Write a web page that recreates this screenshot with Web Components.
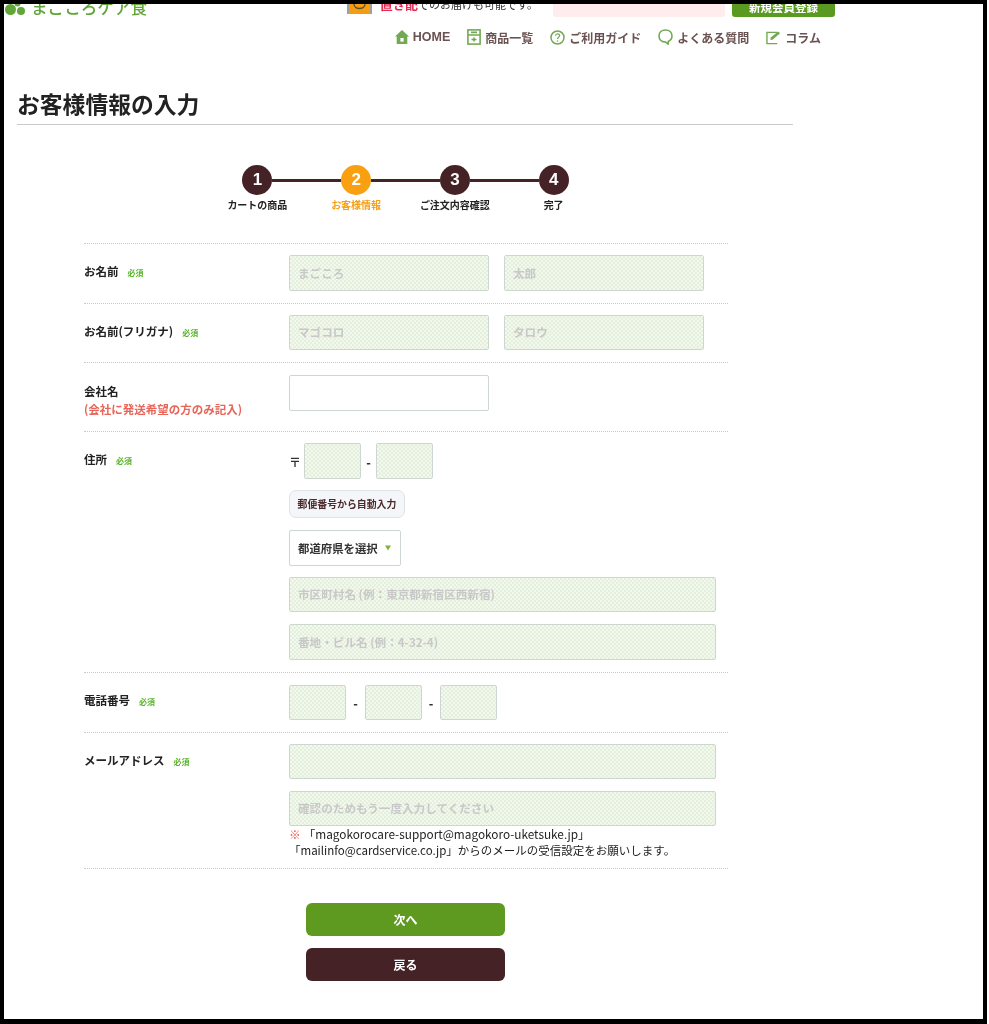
<!DOCTYPE html>
<html lang="ja">
<head>
<meta charset="utf-8">
<title>お客様情報の入力</title>
<style>
  html, body { margin: 0; padding: 0; background: #fff; }
  body { font-family: "Noto Sans CJK JP", "Liberation Sans", sans-serif; color: #222; }
</style>
</head>
<body>
<care-frame>
  <site-header></site-header>
  <page-title>お客様情報の入力</page-title>
  <order-steps>
    <order-step num="1">カートの商品</order-step>
    <order-step num="2" current>お客様情報</order-step>
    <order-step num="3">ご注文内容確認</order-step>
    <order-step num="4">完了</order-step>
  </order-steps>
  <customer-form>
    <form-row required>
      <span slot="label">お名前</span>
      <div class="pair"><field-box w="200">まごころ</field-box><field-box w="200">太郎</field-box></div>
    </form-row>
    <form-row required>
      <span slot="label">お名前(フリガナ)</span>
      <div class="pair"><field-box w="200" h="35">マゴコロ</field-box><field-box w="200" h="35">タロウ</field-box></div>
    </form-row>
    <form-row tall>
      <span slot="label">会社名</span>
      <span slot="note">(会社に発送希望の方のみ記入)</span>
      <field-box w="200" blank></field-box>
    </form-row>
    <form-row required>
      <span slot="label">住所</span>
      <address-fields></address-fields>
    </form-row>
    <form-row required>
      <span slot="label">電話番号</span>
      <phone-fields></phone-fields>
    </form-row>
    <form-row required>
      <span slot="label">メールアドレス</span>
      <mail-fields></mail-fields>
    </form-row>
  </customer-form>
  <form-actions></form-actions>
</care-frame>

<script>
// small helper, every element here is just a shadow root with fixed markup
function comp(name, html, extra) {
  class C extends HTMLElement {
    constructor() {
      super();
      this.attachShadow({ mode: 'open' });
    }
    connectedCallback() {
      this.shadowRoot.innerHTML = html;
      if (extra) extra(this);
    }
  }
  customElements.define(name, C);
}

comp('care-frame', `
  <style>
    :host { display: block; box-sizing: border-box; width: 987px; height: 1024px;
            border: solid #000; border-width: 4px 4px 5px 4px; background: #fff; overflow: hidden; }
    .in { filter: blur(.55px); height: 100%; }
  </style>
  <div class="in"><slot></slot></div>`);

comp('site-header', `
  <style>
    :host { display: block; font-family: "Noto Sans CJK JP", sans-serif; }
    .top { height: 13px; overflow: hidden; display: flex; align-items: flex-end; }
    .logo { display: flex; align-items: flex-end; margin-left: 1px; width: 342px; color: #62a53a; font-size: 16.6px; font-weight: 500; line-height: 20px; }
    .logo svg { margin: 0 6px 1px 0; flex: none; }
    .person { flex: none; margin: 0 8px 3px 0; }
    .msg { width: 173px; font-size: 11px; line-height: 16px; white-space: nowrap; color: #333; margin-bottom: 5px; overflow: hidden; }
    .msg b { color: #e8254e; font-size: 12.7px; }
    .pink { width: 172px; height: 20px; background: #ffecec; border-radius: 0 0 3px 3px; }
    .reg { width: 103px; height: 20px; margin-left: 7px; background: #5b9a21; color: #fff; border-radius: 3px; font-size: 11.5px; font-weight: 700; text-align: center; line-height: 20px; }
    nav { display: flex; width: 817px; justify-content: flex-end; align-items: center; height: 16px; margin-top: 12px; color: #6b5252; font-size: 12px; font-weight: 700; white-space: nowrap; }
    nav a { display: flex; align-items: center; gap: 4px; margin-left: 17px; }
    nav .en { font-family: "Liberation Sans", sans-serif; font-size: 12.5px; }
    svg { display: block; }
  </style>
  <div class="top">
    <div class="logo">
      <svg width="20" height="16" viewBox="0 0 20 16"><circle cx="5.500" cy="9.500" r="5.500" fill="#62a53a"/><circle cx="16" cy="11" r="4" fill="#62a53a"/><circle cx="12.500" cy="3.500" r="3" fill="#62a53a"/></svg>
      <span>まごころケア食</span>
    </div>
    <svg class="person" width="25" height="18" viewBox="0 0 25 18"><rect x="2" y="0" width="21" height="18" fill="#f59c12"/><path d="M1 18V8M24 18V8" stroke="#777" stroke-width="1.400"/><path d="M7 8C7 14 18 14 18 8" fill="none" stroke="#553" stroke-width="1.400"/></svg>
    <div class="msg"><b>置き配</b>でのお届けも可能です。</div>
    <div class="pink"></div>
    <div class="reg">新規会員登録</div>
  </div>
  <nav>
    <a><svg width="14" height="14" viewBox="0 0 14 14"><path d="M7 0 14 6.500H12.300V14H1.700V6.500H0Z" fill="#74a953"/><rect x="5.400" y="8" width="3.200" height="3.600" fill="#fff"/></svg><span class="en">HOME</span></a>
    <a><svg width="14" height="16" viewBox="0 0 14 16" fill="none" stroke="#74a953" stroke-width="1.600"><rect x=".9" y=".9" width="12.200" height="14.200"/><path d="M1 6H13M4 3.400H10"/><path d="M4.500 10.500H9.500M7 8.400V12.600"/></svg><span>商品一覧</span></a>
    <a><svg width="15" height="15" viewBox="0 0 15 15"><circle cx="7.500" cy="7.500" r="6.500" fill="none" stroke="#74a953" stroke-width="1.500"/><path d="M5.500 5.800C5.600 3.200 9.600 3.300 9.600 5.600 9.600 7.200 7.500 7.200 7.500 9" fill="none" stroke="#74a953" stroke-width="1.200"/><circle cx="7.500" cy="11" r=".8" fill="#74a953"/></svg><span>ご利用ガイド</span></a>
    <a><svg width="15" height="16" viewBox="0 0 15 16"><path d="M7.500 1C3.600 1 1 3.500 1 7s2.600 6 6.500 6l2.600 2 .2-2.600C12.700 11.400 14 9.500 14 7c0-3.500-2.600-6-6.500-6Z" fill="none" stroke="#74a953" stroke-width="1.600"/></svg><span>よくある質問</span></a>
    <a><svg width="15" height="15" viewBox="0 0 16 15" fill="none" stroke="#74a953" stroke-width="1.500"><path d="M12 14H1V2H12"/><path d="M4.500 10 5 7.500 13 1l2 2-8 7Z" fill="#74a953" stroke="none"/></svg><span>コラム</span></a>
  </nav>`);

comp('page-title', `
  <style>
    :host { display: block; margin: 42px 0 0 13px; width: 776px; height: 37px; border-bottom: 1px solid #c9c9c9; box-sizing: content-box; }
    h1 { margin: 0; font-size: 22.8px; line-height: 33px; font-weight: 700; color: #222; white-space: nowrap; }
  </style>
  <h1><slot></slot></h1>`);

comp('order-steps', `
  <style>
    :host { display: flex; margin: 40px 0 0 204px; width: 395px; }
  </style>
  <slot></slot>`);

comp('order-step', `
  <style>
    :host { display: flex; flex-direction: column; align-items: center; width: 98.750px; --c: #452225; }
    :host([current]) { --c: #f9a011; }
    .track { display: flex; align-items: center; width: 100%; }
    .bar { flex: 1; height: 3px; background: #452225; }
    .dot { width: 30px; height: 30px; border-radius: 50%; background: var(--c); color: #fff; font: 700 17px/30px "Liberation Sans", sans-serif; text-align: center; flex: none; }
    :host(:first-child) .a, :host(:last-child) .b { visibility: hidden; }
    .lbl { margin-top: 2px; font-size: 10px; line-height: 15px; font-weight: 700; white-space: nowrap; color: #222; }
    :host([current]) .lbl { color: #f9a011; }
  </style>
  <div class="track"><span class="bar a"></span><span class="dot"></span><span class="bar b"></span></div>
  <div class="lbl"><slot></slot></div>`,
  el => { el.shadowRoot.querySelector('.dot').textContent = el.getAttribute('num'); });

comp('customer-form', `
  <style>
    :host { display: block; margin: 31px 0 0 80px; width: 644px; border-top: 1px dotted #c8c8c8; }
    ::slotted(*) { border-bottom: 1px dotted #c8c8c8; }
  </style>
  <slot></slot>`);

comp('form-row', `
  <style>
    :host { display: grid; grid-template-columns: 205px 1fr; padding: 11px 0 12px; font-size: 11.500px; }
    :host([tall]) { padding: 12px 0 13px; }
    .l { font-weight: 700; line-height: 17px; padding-top: 8px; color: #222; }
    .req { color: #59b32a; font-size: 8px; margin-left: 9px; font-weight: 700; }
    .n { display: block; color: #e8655a; font-size: 11.500px; line-height: 18px; }
    ::slotted(.pair) { display: flex; gap: 15px; }
  </style>
  <div class="l"><slot name="label"></slot><span class="req">必須</span><span class="n"><slot name="note"></slot></span></div>
  <div><slot></slot></div>`,
  el => { if (!el.hasAttribute('required')) el.shadowRoot.querySelector('.req').remove(); });

comp('field-box', `
  <style>
    :host { display: block; box-sizing: border-box; height: 36px; padding-left: 8px; border: 1px solid #cdd6cf; border-radius: 2px; flex: none;
            font-size: 11.600px; line-height: 34px; font-weight: 700; color: #c8c8c8; white-space: nowrap;
            background: repeating-conic-gradient(#e4f0dc 0 25%, #f2f8ee 0 50%) 0 0 / 4px 4px; }
    :host([blank]) { background: #fff; }
  </style>
  <slot></slot>`,
  el => {
    const w = el.getAttribute('w'), h = el.getAttribute('h');
    if (w) el.style.width = w + 'px';
    if (h) { el.style.height = h + 'px'; el.style.lineHeight = (h - 2) + 'px'; }
  });

comp('address-fields', `
  <style>
    :host { display: flex; flex-direction: column; align-items: flex-start; }
    .zip { display: flex; align-items: center; font-size: 12px; font-weight: 700; color: #333; }
    .zip i { font-style: normal; width: 15px; }
    .zip b { width: 15px; text-align: center; }
    .btn { box-sizing: border-box; margin-top: 11px; width: 116px; height: 28px; border: 1px solid #dfe2e6; border-radius: 7px; background: #f5f6f9; color: #4a2a2c; font-size: 9.900px; font-weight: 700; line-height: 26px; text-align: center; white-space: nowrap; }
    .sel { box-sizing: border-box; margin-top: 12px; width: 112px; height: 36px; padding-left: 8px; border: 1px solid #cdd6cf; border-radius: 2px; font-size: 11.400px; font-weight: 700; line-height: 34px; color: #333; display: flex; gap: 7px; align-items: center; white-space: nowrap; }
    .sel svg { display: block; }
    .gap1 { margin-top: 11px; }
    .gap2 { margin-top: 12px; }
  </style>
  <div class="zip"><i>〒</i><field-box w="57"></field-box><b>-</b><field-box w="57"></field-box></div>
  <div class="btn">郵便番号から自動入力</div>
  <div class="sel">都道府県を選択<svg width="6" height="6" viewBox="0 0 6 6"><path d="M0 .5H6L3 5.500Z" fill="#7cb342"/></svg></div>
  <field-box class="gap1" w="427" h="35">市区町村名 (例：東京都新宿区西新宿)</field-box>
  <field-box class="gap2" w="427">番地・ビル名 (例：4-32-4)</field-box>`);

comp('phone-fields', `
  <style>
    :host { display: flex; align-items: center; padding-top: 1px; font-size: 12px; font-weight: 700; color: #333; }
    b { width: 19px; text-align: center; }
    b + field-box + b { width: 18px; }
  </style>
  <field-box w="57" h="35"></field-box><b>-</b><field-box w="57" h="35"></field-box><b>-</b><field-box w="57" h="35"></field-box>`);

comp('mail-fields', `
  <style>
    :host { display: flex; flex-direction: column; align-items: flex-start; }
    field-box + field-box { margin-top: 12px; }
    p { margin: 0 0 -2px; font-size: 11.500px; line-height: 16px; color: #222; white-space: nowrap; }
    p span { font-size: 11.800px; }
    p i { font-style: normal; color: #e4574b; }
  </style>
  <field-box w="427" h="35"></field-box>
  <field-box w="427" h="35">確認のためもう一度入力してください</field-box>
  <p><span><i>※</i> 「magokorocare-support@magokoro-uketsuke.jp」</span><br>「mailinfo@cardservice.co.jp」からのメールの受信設定をお願いします。</p>`);

comp('form-actions', `
  <style>
    :host { display: flex; flex-direction: column; gap: 12px; margin: 34px 0 0 302px; width: 199px; }
    div { height: 33px; border-radius: 6px; color: #fff; font-size: 12px; font-weight: 700; line-height: 33px; text-align: center; }
    .go { background: #5f9a20; }
    .back { background: #452225; }
  </style>
  <div class="go">次へ</div>
  <div class="back">戻る</div>`);
</script>
</body>
</html>
